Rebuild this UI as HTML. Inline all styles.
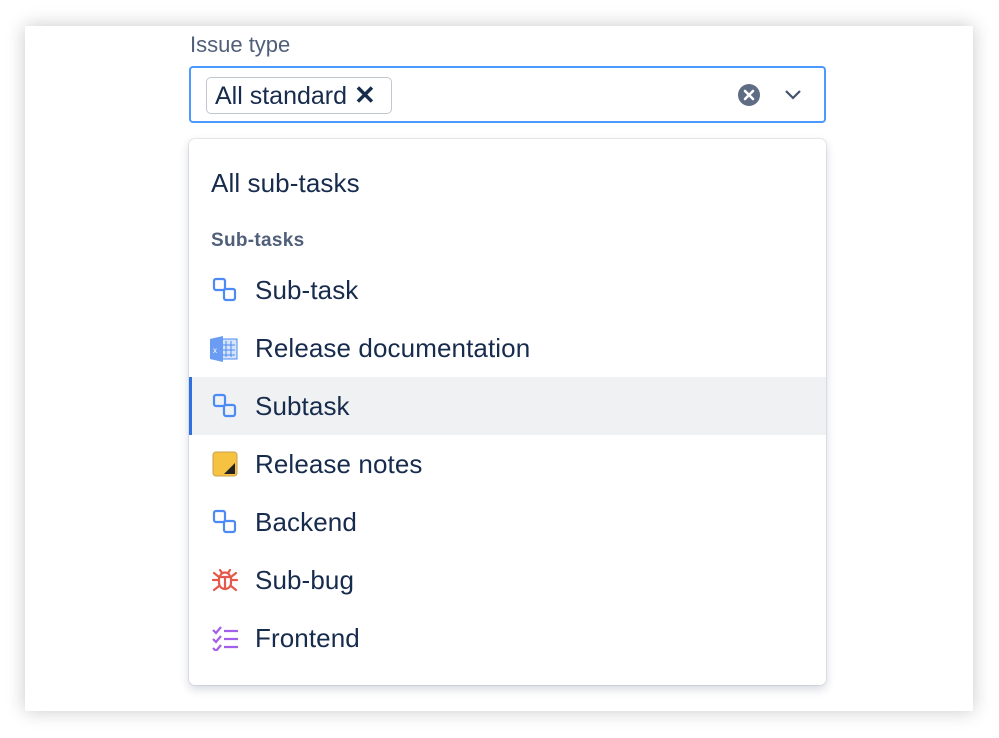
<!DOCTYPE html>
<html><head><meta charset="utf-8"><style>
*{margin:0;padding:0;box-sizing:border-box}
body{width:999px;height:738px;background:#fff;position:relative;overflow:hidden;font-family:"Liberation Sans",sans-serif;color:#172b4d}
.card{position:absolute;left:25px;top:26px;width:948px;height:685px;background:#fff;box-shadow:0 0 18px rgba(0,0,0,.22)}
.label{position:absolute;left:190px;top:32px;font-size:22px;color:#505f79}
.input{position:absolute;left:189px;top:66px;width:637px;height:57px;border:2px solid #4c9aff;border-radius:4px;background:#fff}
.tag{position:absolute;left:15px;top:9px;height:37px;width:186px;border:1px solid #c1c7d0;border-radius:5px;font-size:25px;line-height:35px;padding-left:8px;color:#172b4d;white-space:nowrap}
.clr{position:absolute;left:547px;top:16px;width:22px;height:22px;border-radius:50%;background:#5e6c84}
.dd{position:absolute;left:189px;top:139px;width:637px;height:546px;background:#fff;border-radius:6px;box-shadow:0 0 0 1px rgba(9,30,66,.08),0 4px 10px rgba(9,30,66,.18)}
.it{position:absolute;left:0;width:637px;height:58px;font-size:26px;letter-spacing:.1px;line-height:58px;padding-left:66px}
.it svg{position:absolute;left:23px;top:16px}
.sel{background:#f0f1f3;border-left:3px solid #2f6fe0}
.hdr{position:absolute;left:22px;top:91px;font-size:19px;letter-spacing:.3px;font-weight:bold;color:#505f79}
</style></head><body>
<div class="card"></div>
<div class="label">Issue type</div>
<div class="input">
 <div class="tag">All standard <span style="font-size:26px;font-weight:bold">✕</span></div>
 <div class="clr"><svg width="22" height="22"><path d="M7 7L15 15M15 7L7 15" stroke="#fff" stroke-width="2.6" stroke-linecap="round"/></svg></div>
 <svg style="position:absolute;left:592px;top:20px" width="20" height="14"><path d="M3 3L10 10L17 3" fill="none" stroke="#42526e" stroke-width="2.2"/></svg>
</div>
<div class="dd">
 <div class="it" style="top:15px;padding-left:22px">All sub-tasks</div>
 <div class="hdr">Sub-tasks</div>
 <div class="it" style="top:122px"><svg width="26" height="26"><rect x="2" y="2" width="11" height="11" rx="2" fill="none" stroke="#4c8bf5" stroke-width="2.2"/><rect x="12" y="12" width="11" height="11" rx="2" fill="none" stroke="#4c8bf5" stroke-width="2.2"/></svg>Sub-task</div>
 <div class="it" style="top:180px"><svg width="30" height="28" style="left:20px"><rect x="10" y="4" width="18" height="20" fill="#d5e3fb" stroke="#4c8bf5"/><path d="M17 6v16M22 6v16M12 10h14M12 15h14M12 20h14" stroke="#4c8bf5" stroke-width="1"/><path d="M1 4L14 1V27L1 24Z" fill="#6a9cf3"/><text x="4" y="18" font-size="8" fill="#fff" font-family="Liberation Sans">x</text></svg>Release documentation</div>
 <div class="it sel" style="top:238px;padding-left:63px"><svg width="26" height="26" style="left:20px"><rect x="2" y="2" width="11" height="11" rx="2" fill="none" stroke="#4c8bf5" stroke-width="2.2"/><rect x="12" y="12" width="11" height="11" rx="2" fill="none" stroke="#4c8bf5" stroke-width="2.2"/></svg>Subtask</div>
 <div class="it" style="top:296px"><svg width="26" height="26"><rect x="1" y="1" width="24" height="24" rx="3" fill="#f5c242" stroke="#c9a04a"/><path d="M12 23L23 23L23 12Z" fill="#222"/></svg>Release notes</div>
 <div class="it" style="top:354px"><svg width="26" height="26"><rect x="2" y="2" width="11" height="11" rx="2" fill="none" stroke="#4c8bf5" stroke-width="2.2"/><rect x="12" y="12" width="11" height="11" rx="2" fill="none" stroke="#4c8bf5" stroke-width="2.2"/></svg>Backend</div>
 <div class="it" style="top:412px"><svg width="28" height="28" style="left:22px;top:15px"><g fill="none" stroke="#e5594a" stroke-width="2.2" stroke-linecap="round"><path d="M9 4l2 3M19 4l-2 3"/><path d="M9 11a5 4.5 0 0 1 10 0"/><path d="M8 11h12v6a6 6 0 0 1-12 0z"/><path d="M14 12v11"/><path d="M2 14h6M20 14h6M3 7l5 4M25 7l-5 4M3 24l5-4M25 24l-5-4"/></g></svg>Sub-bug</div>
 <div class="it" style="top:470px"><svg width="28" height="26"><g fill="none" stroke="#a35fe8" stroke-width="2.2"><path d="M1 5l3 3 5-6M1 14l3 3 5-6M1 23l3 3 5-6"/><path d="M12 6h14M12 14h14M12 22h14"/></g></svg>Frontend</div>
</div>
</body></html>
